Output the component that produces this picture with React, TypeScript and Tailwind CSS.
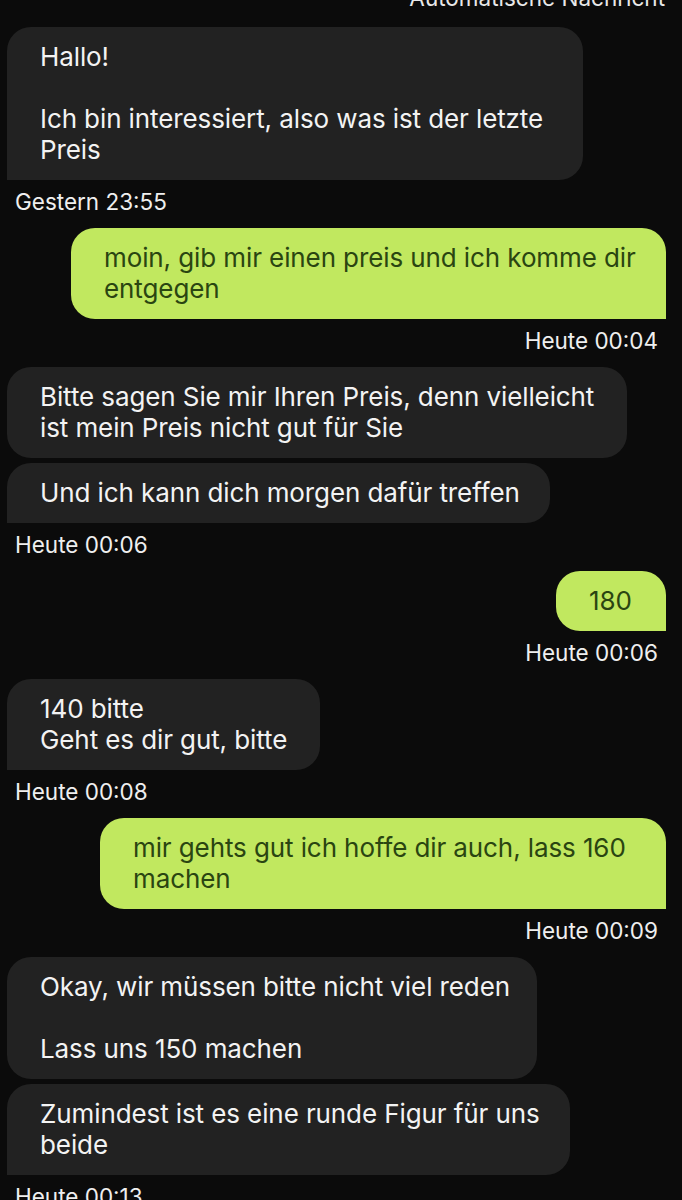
import React from "react";

type Bubble = { text: string; width: number; last?: boolean };
type Group = { side: "in" | "out"; bubbles: Bubble[]; time: string };

const groups: Group[] = [
  {
    side: "in",
    bubbles: [
      {
        text: "Hallo!\n\nIch bin interessiert, also was ist der letzte\nPreis",
        width: 576,
        last: true,
      },
    ],
    time: "Gestern 23:55",
  },
  {
    side: "out",
    bubbles: [
      {
        text: "moin, gib mir einen preis und ich komme dir\nentgegen",
        width: 595,
        last: true,
      },
    ],
    time: "Heute 00:04",
  },
  {
    side: "in",
    bubbles: [
      {
        text: "Bitte sagen Sie mir Ihren Preis, denn vielleicht\nist mein Preis nicht gut für Sie",
        width: 620,
      },
      { text: "Und ich kann dich morgen dafür treffen", width: 543, last: true },
    ],
    time: "Heute 00:06",
  },
  {
    side: "out",
    bubbles: [{ text: "180", width: 110, last: true }],
    time: "Heute 00:06",
  },
  {
    side: "in",
    bubbles: [{ text: "140 bitte\nGeht es dir gut, bitte", width: 313, last: true }],
    time: "Heute 00:08",
  },
  {
    side: "out",
    bubbles: [
      {
        text: "mir gehts gut ich hoffe dir auch, lass 160\nmachen",
        width: 566,
        last: true,
      },
    ],
    time: "Heute 00:09",
  },
  {
    side: "in",
    bubbles: [
      {
        text: "Okay, wir müssen bitte nicht viel reden\n\nLass uns 150 machen",
        width: 530,
      },
      {
        text: "Zumindest ist es eine runde Figur für uns\nbeide",
        width: 563,
        last: true,
      },
    ],
    time: "Heute 00:13",
  },
];

function ChatBubble({ bubble, side }: { bubble: Bubble; side: "in" | "out" }) {
  const isIn = side === "in";
  return (
    <div
      style={{ width: bubble.width }}
      className={`whitespace-pre pt-[14px] pb-[15px] pl-[33px] pr-[8px] text-[26px] leading-[31px] tracking-[-0.1px] rounded-[24px] ${
        isIn
          ? `ml-[7px] bg-[#222222] text-[#f3f3f3] ${bubble.last ? "rounded-bl-none" : ""}`
          : `ml-auto mr-[16px] bg-[#c1e85f] text-[#2a4511] ${bubble.last ? "rounded-br-none" : ""}`
      }`}
    >
      {bubble.text}
    </div>
  );
}

export default function App() {
  return (
    <div className="h-[1200px] overflow-hidden bg-[#0b0b0b] font-['Inter',sans-serif]">
      <div className="-mt-[14px] pr-[17px] text-right text-[22.5px] leading-[24px] text-[#e8e8e8]">
        Automatische Nachricht
      </div>
      <div className="mt-[17px] flex flex-col">
        {groups.map((group, gi) => (
          <div key={gi} className={gi > 0 ? "mt-[14px]" : ""}>
            <div className="flex flex-col gap-[5px]">
              {group.bubbles.map((b, bi) => (
                <ChatBubble key={bi} bubble={b} side={group.side} />
              ))}
            </div>
            <div
              className={`mt-[10px] text-[22.5px] leading-[24px] text-[#efefef] ${
                group.side === "in" ? "pl-[15px]" : "text-right pr-[24px]"
              }`}
            >
              {group.time}
            </div>
          </div>
        ))}
      </div>
    </div>
  );
}
